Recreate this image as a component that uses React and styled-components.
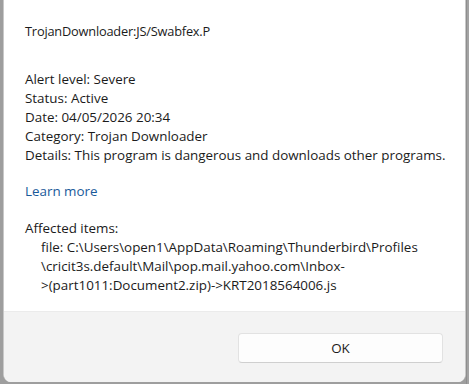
import React from "react";
import styled, { createGlobalStyle } from "styled-components";

const Global = createGlobalStyle`
	html, body {
		margin: 0;
		padding: 0;
		background: #9e9e9e;
	}
`;

const Page = styled.div`
	display: flex;
	width: 469px;
	height: 384px;
	background: #9e9e9e;
	overflow: hidden;
	font-family: "Open Sans", "Noto Sans", sans-serif;
`;

const Dialog = styled.div`
	display: flex;
	flex-direction: column;
	margin-left: 3px;
	width: 461px;
	height: 382px;
	background: #ffffff;
	border-left: 1px solid #c8c8c8;
	border-right: 1px solid #c8c8c8;
	border-radius: 0 0 8px 8px;
	overflow: hidden;
`;

const Body = styled.div`
	flex: 1;
	padding: 22px 0 0 21px;
	color: #1b1b1b;
	font-size: 13.4px;
	line-height: 19px;
`;

const Title = styled.div`
	font-size: 12.8px;
	letter-spacing: -0.2px;
	margin-bottom: 29px;
`;

const Line = styled.div`
	white-space: nowrap;
`;

const Section = styled.div`
	margin-top: ${(p) => p.$gap || 0}px;
`;

const Link = styled.a`
	color: #1a5a9a;
	text-decoration: none;
	font-size: 13.4px;
`;

const Indent = styled.div`
	padding-left: 16px;
	white-space: nowrap;
`;

const Footer = styled.div`
	display: flex;
	justify-content: flex-end;
	align-items: flex-start;
	height: 71px;
	padding: 21px 22px 0 0;
	box-sizing: border-box;
	background: #f3f3f3;
	border-top: 1px solid #ebebeb;
`;

const Button = styled.button`
	width: 205px;
	height: 30px;
	background: #fdfdfd;
	border: 1px solid #e2e2e2;
	border-bottom-color: #cfcfcf;
	border-radius: 4px;
	font-family: "Open Sans", "Noto Sans", sans-serif;
	font-size: 13.4px;
	color: #1b1b1b;
`;

const Edge = styled.div`
	flex: 1;
	background: #a3a3a3;
	border-left: 1px solid #8e8e8e;
`;

export default function App() {
	return (
		<Page>
			<Global />
			<Dialog>
				<Body>
					<Title>TrojanDownloader:JS/Swabfex.P</Title>
					<Section>
						<Line>Alert level: Severe</Line>
						<Line>Status: Active</Line>
						<Line>Date: 04/05/2026 20:34</Line>
						<Line>Category: Trojan Downloader</Line>
						<Line>Details: This program is dangerous and downloads other programs.</Line>
					</Section>
					<Section $gap={17}>
						<Link href="#">Learn more</Link>
					</Section>
					<Section $gap={18}>
						<Line>Affected items:</Line>
						<Indent>
							file: C:\Users\open1\AppData\Roaming\Thunderbird\Profiles
							<br />
							\cricit3s.default\Mail\pop.mail.yahoo.com\Inbox-
							<br />
							&gt;(part1011:Document2.zip)-&gt;KRT2018564006.js
						</Indent>
					</Section>
				</Body>
				<Footer>
					<Button>OK</Button>
				</Footer>
			</Dialog>
			<Edge />
		</Page>
	);
}
